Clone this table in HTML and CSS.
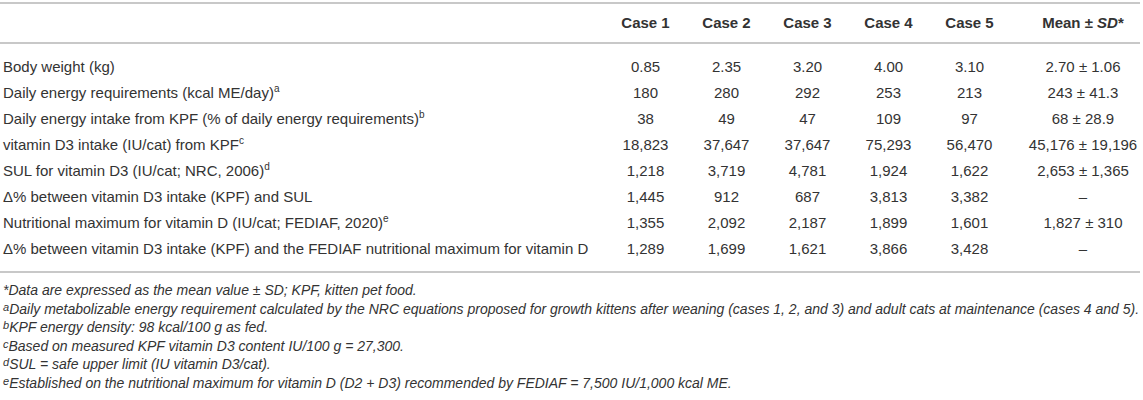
FILE: index.html
```html
<!DOCTYPE html>
<html>
<head>
<meta charset="utf-8">
<link rel="stylesheet" href="styles.css">
</head>
<body>
<div class="wrap">
<table class="data">
  <colgroup>
    <col class="c-label">
    <col class="c-case"><col class="c-case"><col class="c-case"><col class="c-case"><col class="c-case">
    <col class="c-mean">
  </colgroup>
  <thead>
    <tr>
      <th class="lab"></th>
      <th>Case 1</th>
      <th>Case 2</th>
      <th>Case 3</th>
      <th>Case 4</th>
      <th>Case 5</th>
      <th class="mean">Mean ± <i>SD</i>*</th>
    </tr>
  </thead>
  <tbody>
    <tr class="first"><td class="lab">Body weight (kg)</td><td>0.85</td><td>2.35</td><td>3.20</td><td>4.00</td><td>3.10</td><td class="mean">2.70 ± 1.06</td></tr>
    <tr><td class="lab">Daily energy requirements (kcal ME/day)<sup>a</sup></td><td>180</td><td>280</td><td>292</td><td>253</td><td>213</td><td class="mean">243 ± 41.3</td></tr>
    <tr><td class="lab">Daily energy intake from KPF (% of daily energy requirements)<sup>b</sup></td><td>38</td><td>49</td><td>47</td><td>109</td><td>97</td><td class="mean">68 ± 28.9</td></tr>
    <tr><td class="lab">vitamin D3 intake (IU/cat) from KPF<sup>c</sup></td><td>18,823</td><td>37,647</td><td>37,647</td><td>75,293</td><td>56,470</td><td class="mean">45,176 ± 19,196</td></tr>
    <tr><td class="lab">SUL for vitamin D3 (IU/cat; NRC, 2006)<sup>d</sup></td><td>1,218</td><td>3,719</td><td>4,781</td><td>1,924</td><td>1,622</td><td class="mean">2,653 ± 1,365</td></tr>
    <tr><td class="lab">Δ% between vitamin D3 intake (KPF) and SUL</td><td>1,445</td><td>912</td><td>687</td><td>3,813</td><td>3,382</td><td class="mean">–</td></tr>
    <tr><td class="lab">Nutritional maximum for vitamin D (IU/cat; FEDIAF, 2020)<sup>e</sup></td><td>1,355</td><td>2,092</td><td>2,187</td><td>1,899</td><td>1,601</td><td class="mean">1,827 ± 310</td></tr>
    <tr class="last"><td class="lab">Δ% between vitamin D3 intake (KPF) and the FEDIAF nutritional maximum for vitamin D</td><td>1,289</td><td>1,699</td><td>1,621</td><td>3,866</td><td>3,428</td><td class="mean">–</td></tr>
  </tbody>
</table>
<div class="notes">
  <p>*Data are expressed as the mean value ± SD; KPF, kitten pet food.</p>
  <p><sup>a</sup>Daily metabolizable energy requirement calculated by the NRC equations proposed for growth kittens after weaning (cases 1, 2, and 3) and adult cats at maintenance (cases 4 and 5).</p>
  <p><sup>b</sup>KPF energy density: 98 kcal/100 g as fed.</p>
  <p><sup>c</sup>Based on measured KPF vitamin D3 content IU/100 g = 27,300.</p>
  <p><sup>d</sup>SUL = safe upper limit (IU vitamin D3/cat).</p>
  <p><sup>e</sup>Established on the nutritional maximum for vitamin D (D2 + D3) recommended by FEDIAF = 7,500 IU/1,000 kcal ME.</p>
</div>
</div>
</body>
</html>
```

FILE: styles.css
```css
html, body {
  margin: 0;
  padding: 0;
  background: #fff;
}
body {
  font-family: "Liberation Sans", Arial, sans-serif;
  color: #333;
}
.wrap {
  width: 1140px;
  padding-top: 2px;
}
.data {
  width: 1140px;
  border-collapse: collapse;
  table-layout: fixed;
  font-size: 15px;
}
.c-label { width: 605px; }
.c-case { width: 81px; }
.c-mean { width: 130px; }
.data thead tr {
  border-top: 2px solid #c8c8c8;
  border-bottom: 2px solid #c8c8c8;
}
.data tbody tr.last {
  border-bottom: 2px solid #c8c8c8;
}
.data th {
  font-weight: bold;
  text-align: center;
  line-height: 18px;
  padding: 10px 0;
  white-space: nowrap;
}
.data td {
  text-align: center;
  line-height: 18px;
  padding: 4px 0;
  white-space: nowrap;
}
.data .mean {
  padding-left: 16px;
}
.data .lab {
  text-align: left;
  padding-left: 3px;
}
.data tbody tr.first td { padding-top: 14px; }
.data tbody tr.last td { padding-bottom: 13px; }
sup {
  font-size: 10px;
  line-height: 0;
  vertical-align: 6px;
}
.notes {
  padding: 8px 0 0 3px;
  font-size: 14px;
  font-style: italic;
}
.notes p {
  margin: 0;
  line-height: 18.6px;
}
.notes sup {
  font-size: 11px;
  vertical-align: 3px;
}
```
